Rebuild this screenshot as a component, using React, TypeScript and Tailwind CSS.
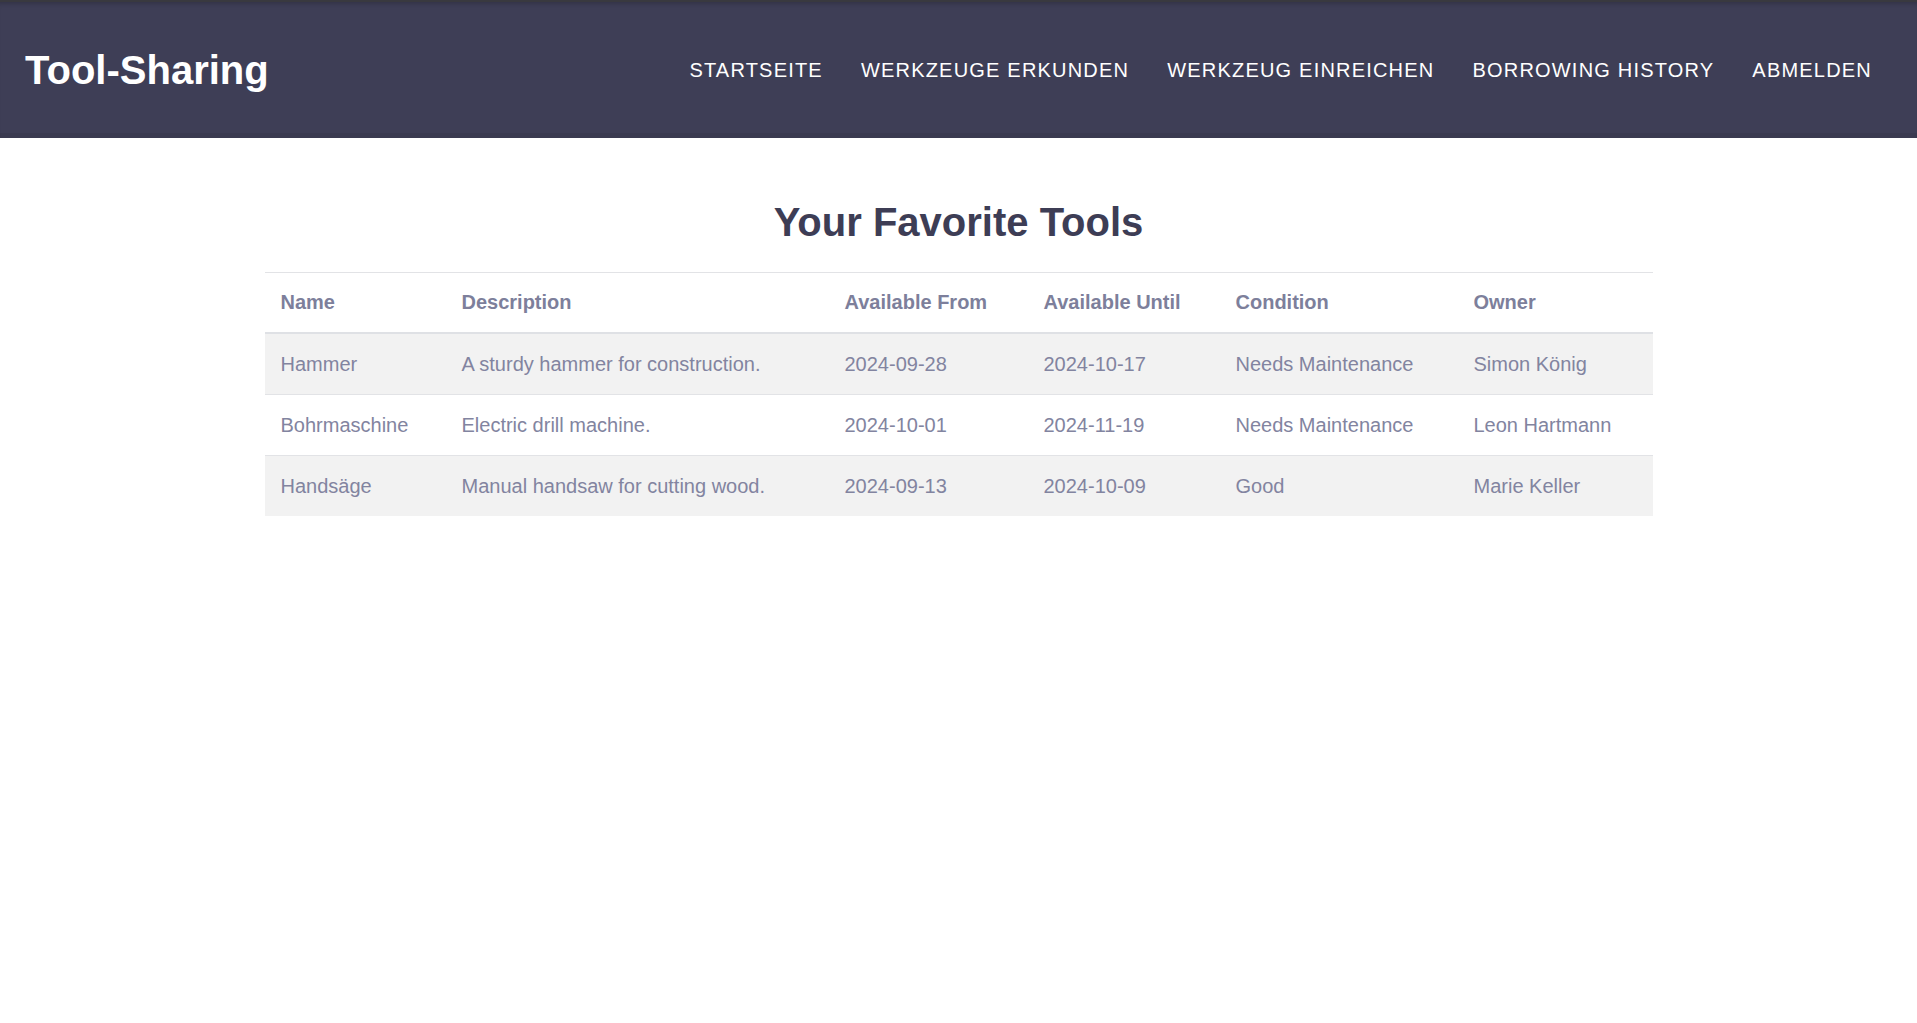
import { useState } from "react";

interface FavoriteTool {
  name: string;
  description: string;
  availableFrom: string;
  availableUntil: string;
  condition: string;
  owner: string;
}

const navLinks = [
  "Startseite",
  "Werkzeuge erkunden",
  "Werkzeug einreichen",
  "Borrowing History",
  "Abmelden",
];

export default function App() {
  const [tools] = useState<FavoriteTool[]>([
    {
      name: "Hammer",
      description: "A sturdy hammer for construction.",
      availableFrom: "2024-09-28",
      availableUntil: "2024-10-17",
      condition: "Needs Maintenance",
      owner: "Simon König",
    },
    {
      name: "Bohrmaschine",
      description: "Electric drill machine.",
      availableFrom: "2024-10-01",
      availableUntil: "2024-11-19",
      condition: "Needs Maintenance",
      owner: "Leon Hartmann",
    },
    {
      name: "Handsäge",
      description: "Manual handsaw for cutting wood.",
      availableFrom: "2024-09-13",
      availableUntil: "2024-10-09",
      condition: "Good",
      owner: "Marie Keller",
    },
  ]);

  return (
    <div className="min-h-screen bg-white font-['Liberation_Sans',Arial,sans-serif]">
      {/* Header */}
      <header className="h-[138px] bg-[#3e3e56] border-t-[2px] border-[#39393f] shadow-[inset_0_5px_4px_-3px_rgba(0,0,0,0.18),inset_0_-5px_0_0_rgba(0,0,0,0.06)] flex items-center justify-between pl-[25px] pr-[45px]">
        <h1 className="text-[40px] font-bold text-white leading-[46px]">
          Tool-Sharing
        </h1>
        <nav className="flex items-center gap-[38px]">
          {navLinks.map((link) => (
            <a
              key={link}
              href="#"
              className="text-[20px] uppercase tracking-[1.2px] text-white leading-[24px]"
            >
              {link}
            </a>
          ))}
        </nav>
      </header>

      {/* Favorites */}
      <main className="pt-[61px]">
        <h2 className="text-center text-[40px] font-bold leading-[46px] text-[#3d3d55] mb-[27px]">
          Your Favorite Tools
        </h2>

        <table className="w-[1388px] mx-auto table-fixed border-collapse border-t border-[#e2e3e6] text-left">
          <colgroup>
            <col className="w-[181px]" />
            <col className="w-[383px]" />
            <col className="w-[199px]" />
            <col className="w-[192px]" />
            <col className="w-[238px]" />
            <col className="w-[195px]" />
          </colgroup>
          <thead>
            <tr className="border-b-2 border-[#dfe1e5]">
              <th className="px-4 py-[18px] text-[20px] leading-[23px] font-bold text-[#7d7f9b]">Name</th>
              <th className="px-4 py-[18px] text-[20px] leading-[23px] font-bold text-[#7d7f9b]">Description</th>
              <th className="px-4 py-[18px] text-[20px] leading-[23px] font-bold text-[#7d7f9b]">Available From</th>
              <th className="px-4 py-[18px] text-[20px] leading-[23px] font-bold text-[#7d7f9b]">Available Until</th>
              <th className="px-4 py-[18px] text-[20px] leading-[23px] font-bold text-[#7d7f9b]">Condition</th>
              <th className="px-4 py-[18px] text-[20px] leading-[23px] font-bold text-[#7d7f9b]">Owner</th>
            </tr>
          </thead>
          <tbody>
            {tools.map((tool, idx) => (
              <tr
                key={tool.name}
                className={
                  idx % 2 === 0
                    ? idx === 0
                      ? "bg-[#f2f2f2]"
                      : "bg-[#f2f2f2] border-t border-[#e2e3e6]"
                    : "bg-white border-t border-[#e2e3e6]"
                }
              >
                <td className="px-4 py-[18px] text-[20px] leading-[24px] text-[#8284a0]">{tool.name}</td>
                <td className="px-4 py-[18px] text-[20px] leading-[24px] text-[#8284a0]">{tool.description}</td>
                <td className="px-4 py-[18px] text-[20px] leading-[24px] text-[#8284a0]">{tool.availableFrom}</td>
                <td className="px-4 py-[18px] text-[20px] leading-[24px] text-[#8284a0]">{tool.availableUntil}</td>
                <td className="px-4 py-[18px] text-[20px] leading-[24px] text-[#8284a0]">{tool.condition}</td>
                <td className="px-4 py-[18px] text-[20px] leading-[24px] text-[#8284a0]">{tool.owner}</td>
              </tr>
            ))}
          </tbody>
        </table>
      </main>
    </div>
  );
}
